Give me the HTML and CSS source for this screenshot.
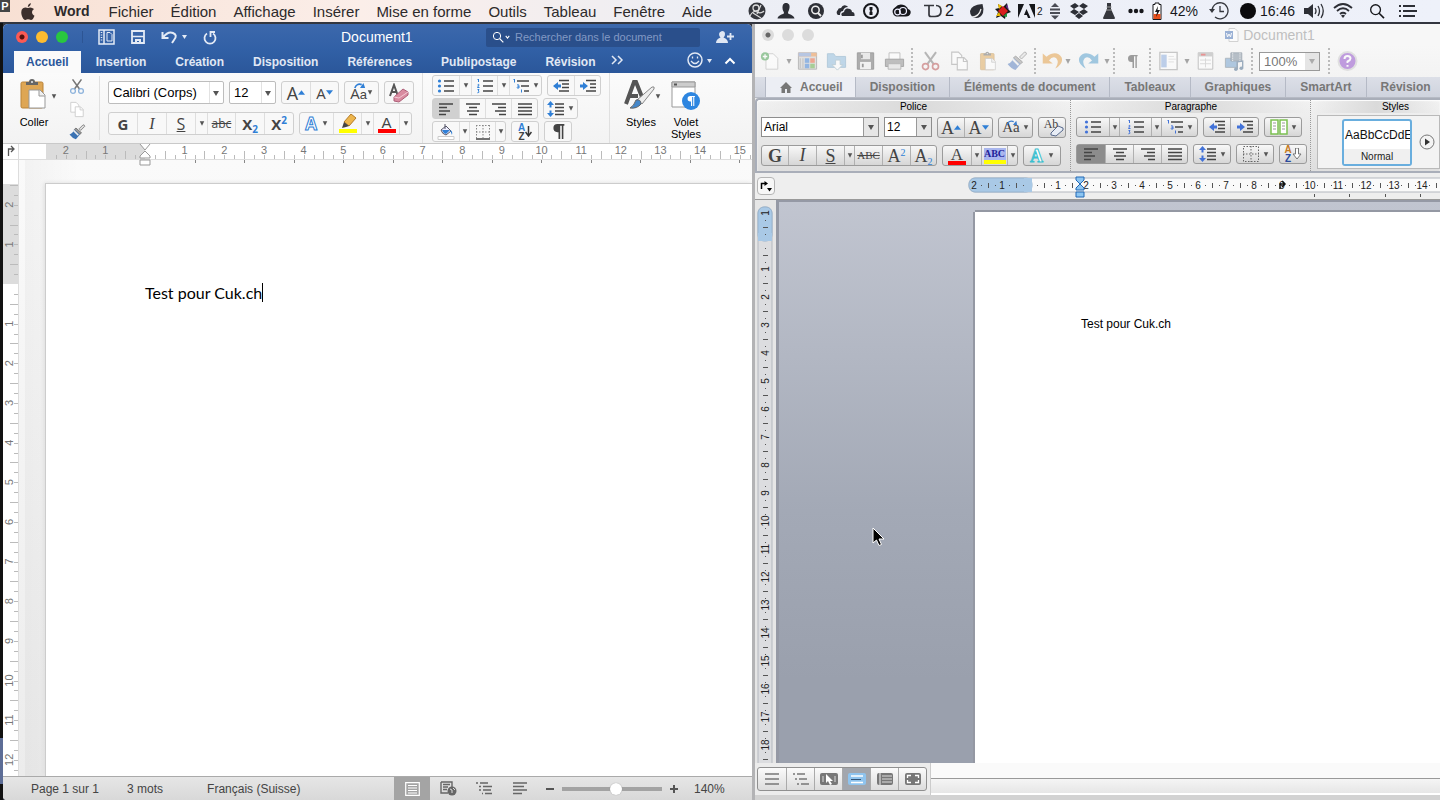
FILE: index.html
```html
<!DOCTYPE html>
<html lang="fr">
<head>
<meta charset="utf-8">
<title>Document1</title>
<link rel="stylesheet" href="styles.css">
</head>
<body>
<svg class="defs" aria-hidden="true">
  <symbol id="caret" viewBox="0 0 8 6"><path d="M1 0h6L4 6z" fill="currentColor"/></symbol>
  <symbol id="bullets" viewBox="0 0 18 16"><path d="M7 3h10M7 8h10M7 13h10" stroke="currentColor" stroke-width="1.3"/><g fill="var(--accent)"><circle cx="2.5" cy="3" r="1.6"/><circle cx="2.5" cy="8" r="1.6"/><circle cx="2.5" cy="13" r="1.6"/></g></symbol>
  <symbol id="numbers" viewBox="0 0 18 16"><path d="M7 3h10M7 8h10M7 13h10" stroke="currentColor" stroke-width="1.3"/><path d="M1.500 2l1-1v3M1.500 7q1.500-1.500 1.500 0L1.500 9.500H3.500M1.500 11.500H3L2.200 13q1.500.5.5 1.500l-1.300.3" stroke="var(--accent)" fill="none"/></symbol>
  <symbol id="multi" viewBox="0 0 18 16"><path d="M5 3h12M9 8h8M12 13h5" stroke="currentColor" stroke-width="1.300"/><path d="M1.500 2l1-1v3.500M5 7q2-1 2 1v2H5.500q-1-.2 0-1.200H7M9.500 11.500v3" stroke="var(--accent)" fill="none"/></symbol>
  <symbol id="left" viewBox="0 0 18 16"><path d="M2 3h14M2 6.500h8M2 10h11M2 13.500h7" stroke="currentColor" stroke-width="1.300"/></symbol>
  <symbol id="center" viewBox="0 0 18 16"><path d="M2 3h14M5 6.500h8M3 10h12M5 13.500h8" stroke="currentColor" stroke-width="1.300"/></symbol>
  <symbol id="right" viewBox="0 0 18 16"><path d="M2 3h14M8 6.500h8M5 10h11M9 13.500h7" stroke="currentColor" stroke-width="1.300"/></symbol>
  <symbol id="justify" viewBox="0 0 18 16"><path d="M2 3h14M2 6.500h14M2 10h14M2 13.500h14" stroke="currentColor" stroke-width="1.300"/></symbol>
  <symbol id="outdent" viewBox="0 0 18 16"><path d="M7 2.500h10M10 6h7M10 9.500h7M7 13h10" stroke="currentColor" stroke-width="1.300"/><path d="M1 8l5-4v2.500h3v3H6V12z" fill="var(--accent)"/></symbol>
  <symbol id="indent" viewBox="0 0 18 16"><path d="M7 2.500h10M11 6h6M11 9.500h6M7 13h10" stroke="currentColor" stroke-width="1.300"/><path d="M9 8L4 4v2.500H1v3h3V12z" fill="var(--accent)"/></symbol>
  <symbol id="spacing" viewBox="0 0 18 16"><path d="M8 3h9M8 6.500h9M8 10h9M8 13.500h9" stroke="currentColor" stroke-width="1.300"/><path d="M3.500 0L7 4H4.500v2.500h-2V4H0zM3.500 16L7 12H4.500V9.500h-2V12H0z" fill="var(--accent)"/></symbol>
  <symbol id="borders" viewBox="0 0 18 16"><path d="M2 1.500h14M2 8h14M2.500 1v13M9 1v13M15.500 1v13" stroke="#888" stroke-dasharray="1.500 1.500" fill="none"/><path d="M2 15h14" stroke="currentColor" stroke-width="1.500"/></symbol>
  <symbol id="pilcrow" viewBox="0 0 14 16"><path d="M12.500 1H6a3.800 3.800 0 0 0 0 7.600h1V15h1.600V2.500h1.500V15h1.500V2.500h.9z" fill="currentColor"/></symbol>
  <symbol id="scissors" viewBox="0 0 18 18"><path d="M4 1l8 11M14 1L6 12" stroke="#777" stroke-width="1.800" fill="none"/><circle cx="4.500" cy="14" r="2.700" fill="none" stroke="var(--cut)" stroke-width="1.500"/><circle cx="13.500" cy="14" r="2.700" fill="none" stroke="var(--cut)" stroke-width="1.500"/></symbol>
  <symbol id="copy" viewBox="0 0 18 18"><path d="M2 1h6l3 3v8H2z" fill="#fff" stroke="currentColor"/><path d="M7 6h6l3 3v8H7z" fill="#fff" stroke="currentColor"/><path d="M12.500 6v3.500H16" fill="none" stroke="currentColor"/></symbol>
  <symbol id="brush" viewBox="0 0 20 20"><path d="M12 6l5-5q2 0 2 2l-5 5z" fill="#ddd" stroke="#777"/><path d="M8 5l7 6-2 2-7-6z" fill="#999" stroke="#666"/><path d="M6 7l7 6-5 6q-4-1-8-6 4-1 6-6z" fill="var(--bristle)"/><path d="M5 8l6 6" stroke="#eee" stroke-width="2"/></symbol>
  <symbol id="clipboard" viewBox="0 0 28 32"><rect x="1" y="4" width="22" height="26" rx="1.500" fill="#dea654" stroke="#b98338"/><path d="M6 7V4h3q0-3 3-3t3 3h3v3z" fill="#666"/><circle cx="12" cy="4" r="1" fill="#eee"/><path d="M9 12h11l5 5v13H9z" fill="#fff" stroke="#999"/><path d="M19 12v6h6" fill="#eee" stroke="#999"/></symbol>
  <symbol id="undo" viewBox="0 0 18 16"><path d="M2 2v8h8L7 7.500q3-4 6-1.500 2.500 3-1 8 7-4 5-9-4-6-12-.5z" fill="currentColor"/></symbol>
  <symbol id="magnifier" viewBox="0 0 18 18"><circle cx="7.500" cy="7.500" r="5.500" fill="none" stroke="currentColor" stroke-width="1.500"/><path d="M11.500 11.500L17 17" stroke="currentColor" stroke-width="1.800"/></symbol>
</svg>

<header class="menubar">
  <span class="plogo" aria-hidden="true">P</span>
  <svg class="apple" viewBox="0 0 14 17" aria-hidden="true"><path d="M9.800 0q0 3-3 4Q6.800 1 9.800 0zM7 5q3-1.500 6 1-3 2-1.500 5 .7 1.300 2 1.800-1.500 4.200-3.500 4.200-1.500-.8-3-.8t-2.500.8Q2 17 .6 12-.5 7 2 5.300q2-1.500 5-.3z" fill="#3c2f2c"/></svg>
  <nav class="menus">
    <button class="app">Word</button><button>Fichier</button><button>Édition</button><button>Affichage</button><button>Insérer</button><button>Mise en forme</button><button>Outils</button><button>Tableau</button><button>Fenêtre</button><button>Aide</button>
  </nav>
  <div class="extras">
    <svg width="20" height="18" viewBox="0 0 20 18"><circle cx="10" cy="9" r="8.500" fill="#35373d"/><circle cx="9" cy="6" r="3" fill="none" stroke="#ddd" stroke-width="1.300"/><path d="M3 14q3-6 7-4t7-1M6 11l8 5M14 3l-4 9" stroke="#ddd" fill="none" stroke-width="1.200"/></svg>
    <svg width="22" height="18" viewBox="0 0 22 18"><path d="M11 1c3 0 4 2.500 3.500 5S13 9.500 13 11c0 1.500 6 1.500 6.500 5.500h-17C3 12.500 9 12.500 9 11c0-1.500-1.500-2.500-1.500-5S8 1 11 1z" fill="#2d2f36"/></svg>
    <svg width="22" height="18" viewBox="0 0 22 18"><circle cx="11" cy="9" r="8" fill="#2d2f36"/><circle cx="10.500" cy="8" r="3.700" fill="none" stroke="#eee" stroke-width="1.500"/><path d="M13 11l3 3" stroke="#eee" stroke-width="2"/></svg>
    <svg width="20" height="18" viewBox="0 0 20 18"><path d="M3 13a3 3 0 0 1 0-5q0-2 3-2 2-4 6-2l1 1q-4 0-5 4-3 0-3 4z" fill="#2d2f36"/><path d="M7 14q-2-3 2-4 1-5 6-3 2 1 2 3 3 0 2.500 4z" fill="#2d2f36"/></svg>
    <svg width="16" height="18" viewBox="0 0 16 18"><circle cx="8" cy="9" r="7" fill="none" stroke="#16171b" stroke-width="2"/><path d="M6.500 5h3v3l-1 1 1 1v3h-3v-3l1-1-1-1z" fill="#16171b"/></svg>
    <svg width="28" height="18" viewBox="0 0 28 18"><path d="M9 14.500a5 5 0 0 1-1-9Q12 .5 18 3.500q3 2 3 3.500 3.500 1 2.500 4.500-1 3-4.500 3z" fill="#16171b"/><circle cx="10.500" cy="10" r="2.800" fill="none" stroke="#eef" stroke-width="1.200"/><circle cx="16" cy="9" r="3.500" fill="none" stroke="#eef" stroke-width="1.200"/></svg>
    <span class="td"><svg width="20" height="16" viewBox="0 0 20 16"><path d="M1 2.500h10M6 2.500v9q0 2 2 2h4q6 0 6-5.500t-5-5.500" fill="none" stroke="#35373d" stroke-width="1.700"/></svg>2</span>
    <svg width="20" height="18" viewBox="0 0 20 18"><path d="M15.500 2Q17 7 16 11q-2 5-7 5-6-1-6-7 1-6 12.500-7z" fill="#2d2f36"/><path d="M5 15q7 0 9-8" fill="none" stroke="#eee" stroke-width="1.200"/></svg>
    <svg width="16" height="18" viewBox="0 0 16 18"><path d="M3 2l5 3 4-4 1 6 3 3-5 2-1 5-4-3-5 2 2-6-3-3 4-1z" fill="#181818"/><path d="M8 4l5 5-5 5-5-5z" fill="#d81e1e"/><path d="M3 2l4 2-3 3z" fill="#f0c000"/><path d="M12 2l2 6-3-3z" fill="#6a2d98"/><path d="M12 15l-4-1 4-3z" fill="#20943c"/><path d="M1 14l3-4 2 4z" fill="#e9b700"/></svg>
    <span class="adobe"><svg width="17" height="16" viewBox="0 0 17 16"><path d="M0 1h6L0 15zM11 1h6v14zM8.500 6l4 9H10l-1.200-3H6z" fill="#16171b"/></svg><b>2</b></span>
    <svg width="10" height="18" viewBox="0 0 10 18"><path d="M1 5l4-4 4 4zM0 6.500h10v2H0zM0 10h10v2H0zM1 13.500h8l-4 4z" fill="#4a4c55"/></svg>
    <svg width="22" height="18" viewBox="0 0 22 18"><path d="M7 1l4 3-5 3-4-3zM15 1l5 3-4 3-5-3zM6 7l5 3-4 3-5-3zM16 7l4 3-5 3-4-3zM7 14l4-3 4 3-4 3z" fill="#2d2f36"/></svg>
    <svg width="22" height="18" viewBox="0 0 22 18"><path d="M9 1h4v6l4 9q0 1-1 1H6q-1 0-1-1l4-9z" fill="#35373d"/><path d="M8.500 5h5M8 8h6" stroke="#999"/></svg>
    <svg width="16" height="18" viewBox="0 0 16 18"><g fill="#16171b"><circle cx="2.500" cy="9" r="2.200"/><circle cx="8" cy="9" r="2.200"/><circle cx="13.500" cy="9" r="2.200"/></g></svg>
    <svg width="10" height="18" viewBox="0 0 10 18"><path d="M3 1h4v1.500h2v15H1v-15h2z" fill="#fff" stroke="#16171b"/><path d="M1.500 12h7v5h-7z" fill="#e8501c"/><path d="M6 4L3 10h2l-1 5 4-7H5.500z" fill="#16171b"/></svg>
    <span>42%</span>
    <svg width="26" height="18" viewBox="0 0 26 18"><path d="M6 9a8 8 0 1 1 3 6" fill="none" stroke="#35373d" stroke-width="1.300"/><path d="M3 7l3 4 3-4z" fill="#35373d"/><path d="M14 4v5.500h4" fill="none" stroke="#35373d" stroke-width="1.300"/></svg>
    <svg width="16" height="18" viewBox="0 0 16 18"><circle cx="8" cy="9" r="8" fill="#0b0b0e"/></svg>
    <span class="clock">16:46</span>
    <svg width="22" height="18" viewBox="0 0 22 18"><path d="M1 6h4l5-4v14l-5-4H1z" fill="#2d2f36"/><path d="M12 6q2 3 0 6M15 4q3 5 0 10M18 2q4.500 7 0 14" fill="none" stroke="#2d2f36" stroke-width="1.300"/></svg>
    <svg width="20" height="18" viewBox="0 0 20 18"><path d="M1 6q9-8 18 0M4 9q6-5.500 12 0M7 12q3-2.500 6 0" fill="none" stroke="#2d2f36" stroke-width="1.800"/><path d="M8 13.500q2-1.500 4 0L10 16z" fill="#2d2f36"/></svg>
    <svg width="30" height="16" viewBox="-7 0 30 18"><use href="#magnifier" width="18" height="18"/></svg>
    <svg width="18" height="18" viewBox="0 0 18 18"><path d="M0 4h2M0 9h2M0 14h2M4 4h12M4 9h14M4 14h12" stroke="#2d2f36" stroke-width="2"/></svg>
  </div>
</header>

<main class="desktop">
  <div class="edge"></div>

  <section class="win modern" aria-label="Document1, Word 2016">
    <div class="m-title">
      <div class="lights"><i class="red"></i><i class="yellow"></i><i class="green"></i></div>
      <div class="quick">
        <svg width="17" height="16" viewBox="0 0 17 16"><path d="M1 1h15v14H1zM6 1v14" fill="none" stroke="currentColor" stroke-width="1.500"/><path d="M3.500 3v10" stroke="currentColor" stroke-width="1.500" stroke-dasharray="1 1.500"/><path d="M9 3.500h3l2 2V12H9z" fill="none" stroke="currentColor"/></svg>
        <svg width="14" height="14" viewBox="0 0 14 14"><path d="M1 1h12v12H1z" fill="none" stroke="currentColor" stroke-width="1.800"/><path d="M1 6.500h12" fill="none" stroke="currentColor" stroke-width="1.600"/><path d="M4 9h6v5H8v-3H6v3H4z" fill="currentColor"/></svg>
        <svg width="26" height="16" viewBox="0 0 26 16"><path d="M1.500 3v6h6M2 8.500Q7 2 12 4t1 7l-2 3" fill="none" stroke="currentColor" stroke-width="2"/><path d="M21 6h5l-2.500 4z" fill="currentColor"/></svg>
        <svg width="14" height="15" viewBox="0 0 14 15"><path d="M4 3.500a5.500 5.500 0 1 0 6 0M7.500 7V2H12" fill="none" stroke="currentColor" stroke-width="1.800"/></svg>
      </div>
      <h1>Document1</h1>
      <label class="search"><svg width="12" height="14" viewBox="0 0 18 18"><use href="#magnifier"/></svg><svg width="5" height="4" viewBox="0 0 7 5"><path d="M1 1l2.500 3L6 1" fill="none" stroke="#fff" stroke-width="1.500"/></svg><input type="search" placeholder="Rechercher dans le document" aria-label="Rechercher dans le document"></label>
      <svg class="share" width="18" height="14" viewBox="0 0 18 14"><path d="M6 1q3 0 3 3T7.500 7.500Q12 9 12 13H0Q0 9 4.500 7.500 3 6 3 4t3-3z" fill="#dfe7f4"/><path d="M14.500 3v7M11 6.500h7" stroke="#dfe7f4" stroke-width="1.800"/></svg>
    </div>
    <nav class="m-tabs">
      <button class="on">Accueil</button><button>Insertion</button><button>Création</button><button>Disposition</button><button>Références</button><button>Publipostage</button><button>Révision</button>
      <svg class="more" width="13" height="10" viewBox="0 0 13 10"><path d="M1 1l4 4-4 4M7 1l4 4-4 4" fill="none" stroke="currentColor" stroke-width="1.500"/></svg>
      <svg class="smile" width="44" height="18" viewBox="0 0 44 18"><circle cx="8" cy="9" r="7" fill="none" stroke="currentColor" stroke-width="1.500"/><path d="M5.500 5.500v2M10.500 5.500v2M4 10q4 5 8 0" fill="none" stroke="currentColor" stroke-width="1.300"/><path d="M20 8h5l-2.500 4z" fill="currentColor"/></svg>
      <svg class="fold" width="12" height="8" viewBox="0 0 12 8"><path d="M1.500 6.500L6 2l4.500 4.500" fill="none" stroke="#fff" stroke-width="2"/></svg>
    </nav>

    <div class="m-ribbon">
      <div class="m-paste">
        <button class="big"><svg width="28" height="32"><use href="#clipboard"/></svg><span>Coller</span></button>
        <svg class="caret"><use href="#caret"/></svg>
        <div class="stack">
          <svg width="16" height="17"><use href="#scissors"/></svg>
          <svg class="faint" width="16" height="17"><use href="#copy"/></svg>
          <svg width="17" height="16"><use href="#brush"/></svg>
        </div>
      </div>
      <div class="m-font">
        <div class="row">
          <span class="combo wide"><select aria-label="Police"><option>Calibri (Corps)</option></select></span>
          <span class="combo"><select aria-label="Taille"><option>12</option></select></span>
          <div class="seg"><button class="w28"><span class="g20">A</span><svg class="tri" viewBox="0 0 8 5"><path d="M0 5l4-5 4 5z"/></svg></button><button class="w28"><span class="g17">A</span><svg class="tri" viewBox="0 0 8 5"><path d="M0 0l4 5 4-5z"/></svg></button></div>
          <div class="seg"><button class="w33"><span class="case"><span class="g17">A</span>a<svg viewBox="0 0 14 8"><path d="M1 7q2-6 8-4" fill="none" stroke="#2f7fd6" stroke-width="2"/><path d="M13 7H7l4-6z" fill="#2f7fd6"/></svg></span><svg class="caret"><use href="#caret"/></svg></button></div>
          <div class="seg"><button class="w28" aria-label="Effacer la mise en forme"><svg width="22" height="20" viewBox="0 0 22 20"><path d="M2 13L6 2l4 11M4 9h4" fill="none" stroke="#555" stroke-width="2"/><path d="M6 14L15 6l5 3v3l-9 7-5-1z" fill="#d98ba0" stroke="#ad5f78"/><path d="M6 14l5 1 9-6" fill="none" stroke="#f3c9d4"/></svg></button></div>
        </div>
        <div class="row">
          <div class="seg">
            <button class="w28"><b>G</b></button><button class="w28"><i class="ital">I</i></button><button class="w28"><u>S</u></button><button class="w12" aria-label="Soulignement"><svg class="caret"><use href="#caret"/></svg></button><button class="w28"><s>abc</s></button><button class="w28"><b>X<sub>2</sub></b></button><button class="w28"><b>X<sup>2</sup></b></button>
          </div>
          <div class="seg">
            <button class="w33"><span class="glow">A</span><svg class="caret"><use href="#caret"/></svg></button><button class="w28" aria-label="Surlignage"><svg width="20" height="20" viewBox="0 0 20 20"><path d="M1 15h18v4H1z" fill="#ff0"/><path d="M6 8l7-8 5 4-7 8z" fill="#edb64e" stroke="#b37b28"/><path d="M6 8l5 4-3 1-4 1z" fill="#444"/></svg></button><button class="w12" aria-label="Couleur de surlignage"><svg class="caret"><use href="#caret"/></svg></button><button class="w26"><span class="ink">A</span></button><button class="w12" aria-label="Couleur de police"><svg class="caret"><use href="#caret"/></svg></button>
          </div>
        </div>
      </div>
      <div class="m-para">
        <div class="row">
          <div class="seg"><button class="w26" aria-label="Puces"><svg class="ic"><use href="#bullets"/></svg></button><button class="w12" aria-label="Style de puces"><svg class="caret"><use href="#caret"/></svg></button><button class="w26" aria-label="Numérotation"><svg class="ic"><use href="#numbers"/></svg></button><button class="w12" aria-label="Style de numérotation"><svg class="caret"><use href="#caret"/></svg></button><button class="w32" aria-label="Liste à plusieurs niveaux"><svg class="ic"><use href="#multi"/></svg><svg class="caret"><use href="#caret"/></svg></button></div>
          <div class="seg"><button class="w26" aria-label="Diminuer le retrait"><svg class="ic"><use href="#outdent"/></svg></button><button class="w26" aria-label="Augmenter le retrait"><svg class="ic"><use href="#indent"/></svg></button></div>
        </div>
        <div class="row">
          <div class="seg"><button class="w26 on" aria-label="Gauche"><svg class="ic"><use href="#left"/></svg></button><button class="w26" aria-label="Centrer"><svg class="ic"><use href="#center"/></svg></button><button class="w26" aria-label="Droite"><svg class="ic"><use href="#right"/></svg></button><button class="w26" aria-label="Justifier"><svg class="ic"><use href="#justify"/></svg></button></div>
          <div class="seg"><button class="w33" aria-label="Interligne"><svg class="ic"><use href="#spacing"/></svg><svg class="caret"><use href="#caret"/></svg></button></div>
        </div>
        <div class="row">
          <div class="seg"><button class="w26" aria-label="Trame"><svg class="ic" viewBox="0 0 18 16"><path d="M1 12.500h16v3H1z" fill="#fff" stroke="#ccc"/><path d="M4 6l5-4 5 5-5 4q-4-1-5-5z" fill="#eef" stroke="#556"/><path d="M5 6h8l-4 4q-3-1-4-4zM13 6q3 1 2 5z" fill="#2f7fd6"/><path d="M8 0v5" stroke="#556"/></svg></button><button class="w10" aria-label="Couleur de trame"><svg class="caret"><use href="#caret"/></svg></button><button class="w26" aria-label="Bordures"><svg class="ic"><use href="#borders"/></svg></button><button class="w10" aria-label="Style de bordure"><svg class="caret"><use href="#caret"/></svg></button></div>
          <div class="seg"><button class="w26"><span class="az"><em>A</em>Z</span><svg width="7" height="11" viewBox="0 0 7 11"><path d="M3.500 0v9M.5 6l3 4 3-4" fill="none" stroke="#333" stroke-width="1.500"/></svg></button></div>
          <div class="seg"><button class="w26" aria-label="Marques de paragraphe"><svg width="15" height="17"><use href="#pilcrow"/></svg></button></div>
        </div>
      </div>
      <div class="m-styles">
        <button class="big"><svg width="40" height="32" viewBox="0 0 40 32"><path d="M5 25L13 3h2l6 15M8 17h9" fill="none" stroke="#555" stroke-width="4"/><path d="M16 21L31 8q3-1 2 2L21 25z" fill="#eee" stroke="#888"/><path d="M15 21q5-1 5 4-4 5-11 4 4-2 6-8z" fill="#4587c9" stroke="#666"/></svg><span>Styles</span></button>
        <svg class="caret"><use href="#caret"/></svg>
        <button class="big pane"><svg width="32" height="32" viewBox="0 0 32 32"><path d="M2 3h23v25H2z" fill="#fff" stroke="#999"/><path d="M2 3h23v5H2z" fill="#ccc" stroke="#999"/><path d="M4 5.500h3" stroke="#555" stroke-width="2"/><circle cx="21" cy="22" r="9" fill="#2e86e0"/><svg x="16" y="16" width="10" height="12" color="#fff"><use href="#pilcrow"/></svg></svg><span>Volet<br>Styles</span></button>
      </div>
    </div>

    <div class="m-hruler">
      <div class="tabstop"><svg width="8" height="11" viewBox="0 0 8 11"><path d="M1.500 11V4H6M4 1l3 3-3 3" fill="none" stroke="#555" stroke-width="1.300"/></svg></div>
      <svg class="scale" id="m-h"></svg>
    </div>
    <div class="m-body">
      <svg class="vscale" id="m-v"></svg>
      <div class="m-canvas"><article class="m-page"><p><span class="typed">Test pour Cuk.ch</span></p></article></div>
    </div>

    <footer class="m-status">
      <span>Page 1 sur 1</span><span>3 mots</span><span class="lang">Français (Suisse)</span>
      <div class="views">
        <button class="on" aria-label="Page"><svg width="15" height="14" viewBox="0 0 15 14"><path d="M.7.7h13.600v12.600H.7zM3 3.500h9M3 6h9M3 8.500h9M3 11h9" fill="none" stroke="#fff" stroke-width="1.200"/></svg></button>
        <button aria-label="Web"><svg width="17" height="15" viewBox="0 0 17 15"><path d="M1 1h11v5M1 1v11h7M3 3.500h7M3 6h5M3 8.500h4" fill="none" stroke="currentColor" stroke-width="1.400"/><circle cx="12" cy="10" r="4.500" fill="currentColor"/><path d="M10 8l2 1 0 3M13 7l2 2" stroke="#ddd" fill="none"/></svg></button>
        <button aria-label="Plan"><svg width="16" height="13" viewBox="0 0 16 13"><path d="M0 1h2M4 1h8M3 4.500h2M7 4.500h9M3 8h2M7 8h8M6 11.500h1M9 11.500h7" stroke="currentColor" stroke-width="1.300"/></svg></button>
        <button aria-label="Brouillon"><svg width="15" height="13" viewBox="0 0 15 13"><path d="M0 1h14M0 4.500h11M0 8h14M0 11.500h9" stroke="currentColor" stroke-width="1.300"/></svg></button>
      </div>
      <button class="zoombtn" aria-label="Réduire"><svg width="8" height="8" viewBox="0 0 8 8"><path d="M0 4h8" stroke="currentColor" stroke-width="2"/></svg></button>
      <input class="zoom" type="range" min="0" max="100" value="55" aria-label="Zoom">
      <button class="zoombtn" aria-label="Agrandir"><svg width="8" height="8" viewBox="0 0 8 8"><path d="M0 4h8M4 0v8" stroke="currentColor" stroke-width="2"/></svg></button>
      <span class="pct">140%</span>
    </footer>
  </section>

  <section class="win classic" aria-label="Document1, Word 2011">
    <div class="c-title">
      <div class="lights off"><i class="red"></i><i></i><i></i></div>
      <h2><svg width="14" height="14" viewBox="0 0 14 14"><path d="M4 .5h6l3 3v10H4z" fill="#fff" stroke="#bbb"/><path d="M0 3h8v8H0z" fill="#5d83c0"/><path d="M1.500 5l1 4L4 6l1.500 3 1-4" fill="none" stroke="#fff"/></svg>Document1</h2>
    </div>
    <div class="c-tools">
      <svg class="t29" viewBox="0 0 22 22"><path d="M6 3h8l5 5v12H6z" fill="#fff" stroke="#aaa"/><circle cx="5" cy="6" r="4.500" fill="#3e9a46"/><path d="M5 3.500v5M2.500 6h5" stroke="#fff" stroke-width="1.500"/></svg>
      <svg class="caret"><use href="#caret"/></svg>
      <svg class="t29" viewBox="0 0 22 22"><path d="M1 2h20v18H1z" fill="#ccc" stroke="#777"/><path d="M1 2h20v4H1z" fill="#e98a3d"/><path d="M1 2h14v4H1z" fill="#7a98cf"/><path d="M8 8h5v5H8z" fill="#3277d1"/><path d="M14 8h5v5h-5z" fill="#e6582e"/><path d="M8 14h5v5H8z" fill="#3277d1"/><path d="M14 14h5v5h-5z" fill="#5ca83c"/><path d="M3 8v11M6 8v11" stroke="#888"/></svg>
      <svg class="t29" viewBox="0 0 22 22"><path d="M1 3h7l2 3h11v12H1z" fill="#8ab9dc" stroke="#6f9fc0"/><path d="M10 10h5v5h3l-6 6-6-6h4z" fill="#fff" stroke="#8ab"/></svg>
      <svg class="t29" viewBox="0 0 22 22"><path d="M2 2h18v18H2z" fill="#666" stroke="#444"/><path d="M6 2h10v7H6z" fill="#ddd"/><path d="M5 12h12v8H5z" fill="#eee"/><path d="M8 14v4M7 4v4" stroke="#444" stroke-width="2"/></svg>
      <svg class="t29" viewBox="0 0 22 22"><path d="M5 2h12v8H5z" fill="#fff" stroke="#888"/><path d="M1 9h20v8H1z" fill="#888" stroke="#555"/><path d="M4 14h14v6H4z" fill="#ddd" stroke="#777"/></svg>
      <i class="dots"></i>
      <svg class="t29 red" viewBox="0 0 18 18"><use href="#scissors"/></svg>
      <svg class="t29 pale" viewBox="0 0 18 18"><use href="#copy"/></svg>
      <svg class="t29" viewBox="0 0 28 32"><use href="#clipboard"/></svg>
      <svg class="t29" viewBox="0 0 20 20"><use href="#brush"/></svg>
      <i class="dots"></i>
      <svg class="t29 gold" viewBox="0 0 18 16"><use href="#undo"/></svg>
      <svg class="caret"><use href="#caret"/></svg>
      <svg class="t29 sky" viewBox="0 0 18 16"><g transform="matrix(-1 0 0 1 18 0)"><use href="#undo"/></g></svg>
      <svg class="caret"><use href="#caret"/></svg>
      <i class="dots"></i>
      <svg class="t29 small" viewBox="0 0 14 16"><use href="#pilcrow"/></svg>
      <i class="dots"></i>
      <svg class="t29" viewBox="0 0 22 22"><path d="M1.500 1.500h19v19h-19z" fill="#fff" stroke="#999" stroke-width="1.500"/><path d="M3 4h6v14H3z" fill="#86a9de"/><path d="M11 6h6M11 9h8M11 12h6" stroke="#ccc"/></svg>
      <svg class="caret"><use href="#caret"/></svg>
      <svg class="t29" viewBox="0 0 22 22"><path d="M3 2h16v18H3z" fill="#fff" stroke="#888"/><path d="M3 2h16v4H3z" fill="#aaa"/><path d="M6 4h5" stroke="#d33" stroke-width="2"/><path d="M5 10h12M5 14h12M11 8v10" stroke="#bbb"/></svg>
      <svg class="t29" viewBox="0 0 22 22"><path d="M1 8h13v10H1z" fill="#6b9bcb" stroke="#678"/><path d="M7 2h12v9H7z" fill="#789" stroke="#567"/><path d="M9 2v9M17 2v9" stroke="#fff" stroke-dasharray="1 1"/><path d="M14 20v-8l6-1v8" fill="none" stroke="#468" stroke-width="1.500"/><circle cx="12.500" cy="20" r="2" fill="#468"/><circle cx="18.500" cy="19" r="2" fill="#468"/></svg>
      <i class="dots"></i>
      <span class="combo zoomsel"><select aria-label="Zoom"><option>100%</option></select></span>
      <i class="dots"></i>
      <svg class="t29 help" viewBox="0 0 20 20"><circle cx="10" cy="10" r="9" fill="#8b45c8" stroke="#ccc" stroke-width="2"/><path d="M7 8q0-3 3-3t3 2.500q0 1.500-3 3V12M10 14v1.800" fill="none" stroke="#fff" stroke-width="2"/></svg>
    </div>
    <nav class="c-tabs">
      <button class="on"><svg width="12" height="11" viewBox="0 0 12 11"><path d="M6 0l6 6h-1.500v5H7V7H5v4H1.500V6H0z" fill="#777"/></svg>Accueil</button><button>Disposition</button><button>Éléments de document</button><button>Tableaux</button><button>Graphiques</button><button>SmartArt</button><button>Révision</button>
    </nav>
    <div class="c-ribbon">
      <div class="c-group police">
        <h3>Police</h3>
        <div class="row">
          <span class="combo wide"><select aria-label="Police"><option>Arial</option></select></span>
          <span class="combo"><select aria-label="Taille"><option>12</option></select></span>
          <div class="seg"><button class="w26"><span class="g20">A</span><svg class="tri" viewBox="0 0 8 5"><path d="M0 5l4-5 4 5z"/></svg></button><button class="w28"><span class="g20">A</span><svg class="tri" viewBox="0 0 8 5"><path d="M0 0l4 5 4-5z"/></svg></button></div>
          <div class="seg"><button class="w33"><span class="case"><span>A</span>a<svg viewBox="0 0 14 8"><path d="M1 7q2-6 8-4" fill="none" stroke="#3f80cf" stroke-width="1.500"/><path d="M13 7H8l4-5z" fill="#3f80cf"/></svg></span><svg class="caret"><use href="#caret"/></svg></button></div>
          <div class="seg"><button class="w26"><span class="ab">Ab</span><svg class="rubber" width="14" height="12" viewBox="0 0 14 12"><path d="M1 8l7-7 5 2v2l-7 6-5-1z" fill="#e8edf6" stroke="#57698c"/></svg></button></div>
        </div>
        <div class="row">
          <div class="seg">
            <button class="w26"><b>G</b></button><button class="w28"><i class="ital">I</i></button><button class="w28"><u>S</u></button><button class="w10" aria-label="Soulignement"><svg class="caret"><use href="#caret"/></svg></button><button class="w28"><s>ABC</s></button><button class="w28"><span>A<sup>2</sup></span></button><button class="w26"><span>A<sub>2</sub></span></button>
          </div>
          <div class="seg"><button class="w28"><span class="ink">A</span></button><button class="w10" aria-label="Couleur de police"><svg class="caret"><use href="#caret"/></svg></button><button class="w26"><span class="hl">ABC</span></button><button class="w10" aria-label="Surlignage"><svg class="caret"><use href="#caret"/></svg></button></div>
          <div class="seg"><button class="w36"><span class="glow">A</span><svg class="caret"><use href="#caret"/></svg></button></div>
        </div>
      </div>
      <div class="c-group para">
        <h3>Paragraphe</h3>
        <div class="row">
          <div class="seg"><button class="w32" aria-label="Puces"><svg class="ic"><use href="#bullets"/></svg></button><button class="w10" aria-label="Style de puces"><svg class="caret"><use href="#caret"/></svg></button><button class="w32" aria-label="Numérotation"><svg class="ic"><use href="#numbers"/></svg></button><button class="w10" aria-label="Style de numérotation"><svg class="caret"><use href="#caret"/></svg></button><button class="w36" aria-label="Liste à plusieurs niveaux"><svg class="ic"><use href="#multi"/></svg><svg class="caret"><use href="#caret"/></svg></button></div>
          <div class="seg"><button class="w26" aria-label="Diminuer le retrait"><svg class="ic"><use href="#outdent"/></svg></button><button class="w28" aria-label="Augmenter le retrait"><svg class="ic"><use href="#indent"/></svg></button></div>
          <div class="seg"><button class="w36" aria-label="Colonnes"><svg class="ic" viewBox="0 0 18 16"><path d="M1 1h7v14H1zM10 1h7v14h-7z" fill="#fff" stroke="#7cc152" stroke-width="1.500"/><path d="M3 4h3M3 7h3M3 10h3M12 4h3M12 7h3M12 10h3" stroke="#999"/></svg><svg class="caret"><use href="#caret"/></svg></button></div>
        </div>
        <div class="row">
          <div class="seg"><button class="w28 on" aria-label="Gauche"><svg class="ic"><use href="#left"/></svg></button><button class="w28" aria-label="Centrer"><svg class="ic"><use href="#center"/></svg></button><button class="w28" aria-label="Droite"><svg class="ic"><use href="#right"/></svg></button><button class="w26" aria-label="Justifier"><svg class="ic"><use href="#justify"/></svg></button></div>
          <div class="seg"><button class="w36" aria-label="Interligne"><svg class="ic"><use href="#spacing"/></svg><svg class="caret"><use href="#caret"/></svg></button></div>
          <div class="seg"><button class="w36" aria-label="Bordures"><svg class="ic" viewBox="0 0 18 16"><path d="M1.500.5h15v15h-15zM9 0v16M1 8h16" fill="none" stroke="#666" stroke-dasharray="1.500 1.500"/></svg><svg class="caret"><use href="#caret"/></svg></button></div>
          <div class="seg"><button class="w26"><span class="az"><em>A</em>Z</span><svg width="10" height="12" viewBox="0 0 10 12"><path d="M3.500 0h3v6H9l-4 5-4-5h2.500z" fill="#fff" stroke="#777"/></svg></button></div>
        </div>
      </div>
      <div class="c-group gallery">
        <h3>Styles</h3>
        <div class="shelf">
          <button class="style"><span class="sample">AaBbCcDdE</span><span class="name">Normal</span></button>
          <button class="next" aria-label="Suivant"><svg width="16" height="16" viewBox="0 0 16 16"><circle cx="8" cy="8" r="7" fill="#f4f4f4" stroke="#777"/><path d="M6 4.500l5 3.500-5 3.500z" fill="#333"/></svg></button>
        </div>
      </div>
    </div>
    <div class="c-hruler">
      <button class="c-tabstop" aria-label="Tabulation"><svg width="12" height="12" viewBox="0 0 12 12"><path d="M1.500 9V3.500H6" fill="none" stroke="#000" stroke-width="1.500"/><path d="M4.500 1v5L8 3.500zM7 8h5l-2.500 3.500z"/></svg></button>
      <svg class="scale" id="c-h"></svg>
    </div>
    <div class="c-body">
      <svg class="vscale" id="c-v"></svg>
      <div class="c-canvas">
        <article class="c-page"><p>Test pour Cuk.ch</p></article>
        <svg class="pointer" width="14" height="20" viewBox="0 0 14 20"><path d="M1 1v15l3.500-3 2.500 5.500 2.500-1L7 12h5z" fill="#000" stroke="#fff"/></svg>
      </div>
    </div>
    <footer class="c-status">
      <div class="c-views">
        <button aria-label="Brouillon"><svg width="16" height="12" viewBox="0 0 16 12"><path d="M1 1h14M1 6h14M1 11h14" stroke="currentColor" stroke-width="1.700"/></svg></button>
        <button aria-label="Plan"><svg width="18" height="12" viewBox="0 0 18 12"><path d="M1 1h2M5 1h8M3 6h2M7 6h8M5 11h2M9 11h8" stroke="currentColor" stroke-width="1.700"/></svg></button>
        <button aria-label="Publication"><svg width="18" height="12" viewBox="0 0 18 12"><rect width="18" height="12" rx="2" fill="currentColor"/><path d="M6 1v9l2-2 2 4 2-1-2-3h3z" fill="#fff"/><path d="M3 3v6M15 3v6" stroke="#ddd"/></svg></button>
        <button class="on" aria-label="Page"><svg width="18" height="12" viewBox="0 0 18 12"><rect width="18" height="12" rx="2" fill="#8fc4ee"/><path d="M3 3h12M3 9.500h12" stroke="#fff" stroke-width="1.500"/><path d="M3 6.500h10" stroke="#357"/></svg></button>
        <button aria-label="Bloc-notes"><svg width="16" height="12" viewBox="0 0 16 12"><rect width="16" height="12" rx="2" fill="currentColor"/><path d="M5 3h10M5 6h10M5 9h10M3 0v12" stroke="#ddd" stroke-width="1.200"/></svg></button>
        <button aria-label="Plein écran"><svg width="16" height="12" viewBox="0 0 16 12"><rect width="16" height="12" rx="2" fill="currentColor"/><path d="M2.500 5V2.500H6M10 2.500h3.500V5M13.500 7v2.500H10M6 9.500H2.500V7" fill="none" stroke="#fff" stroke-width="1.300"/></svg></button>
      </div>
      <div class="c-scroll"></div>
    </footer>
  </section>
</main>
<script src="rulers.js"></script>
</body>
</html>
```

FILE: styles.css
```css
* { box-sizing: border-box; }
body { margin: 0; height: 100vh; min-height: 500px; display: flex; flex-direction: column; overflow: hidden; font-family: "Liberation Sans", Arial, sans-serif; color: #222; background: #33363f; }
button, input, select { font: inherit; color: inherit; margin: 0; padding: 0; border: 0; background: none; }
h1, h2, h3, p { margin: 0; font-weight: normal; }
svg { flex: none; display: block; }
.defs { position: absolute; width: 0; height: 0; }

/* System menu bar */
.menubar { height: 23px; display: flex; align-items: center; border-bottom: 1px solid #33363f; font-size: 15px; color: #2d2a2b; background: linear-gradient(90deg, #f8e0d3, #fbeee9 25%, #eceef5 50%, #eef1fa); flex: none; }
.plogo { width: 10px; height: 12px; align-self: flex-start; background: #444; color: #fff; font: bold 11px/12px "Liberation Sans", sans-serif; text-align: center; }
.apple { width: 14px; height: 17px; margin: 0 18px 0 11px; }
.menus { display: flex; gap: 17px; white-space: nowrap; }
.menus .app { font-weight: bold; font-size: 14px; margin: 0 2px 0 1px; }
.extras { margin-left: auto; padding-right: 23px; display: flex; align-items: center; gap: 8px; font-size: 14px; color: #16171b; }
.td, .adobe { display: flex; align-items: center; width: 36px; font-size: 16px; gap: 2px; }
.adobe { width: 24px; margin-left: -1px; }
.adobe b { font-size: 10px; font-weight: normal; }
.clock { margin-left: -4px; }

/* Desktop with two tiled windows */
.desktop { flex: 1; min-height: 0; display: grid; grid-template-columns: 3px minmax(0, 749fr) minmax(0, 688fr); }
.edge { background: linear-gradient(#111 92%, #5d6d96 92%, #5d6d96 98%, #111 98%); }
.win { min-width: 0; min-height: 0; display: flex; flex-direction: column; overflow: hidden; }
.row { display: flex; }
.seg { display: flex; }
.seg button { display: flex; align-items: center; justify-content: center; white-space: nowrap; line-height: 1; }
.w10 { width: 10px; } .w12 { width: 12px; } .w26 { width: 26px; } .w28 { width: 28px; } .w32 { width: 32px; } .w33 { width: 33px; } .w36 { width: 36px; }
.caret { width: 6px; height: 5px; color: #555; }
.tri { width: 7px; height: 5px; fill: #2f7fd6; }
.ic { width: 18px; height: 16px; }
.combo { position: relative; display: block; background: #fff; }
.combo select { appearance: none; width: 100%; height: 100%; display: block; padding-left: 4px; font-size: 13px; color: #000; }
.combo::after { content: ""; position: absolute; right: 4px; top: 50%; margin-top: -2px; border: 3px solid transparent; border-top: 5px solid #555; border-bottom: 0; pointer-events: none; }
.lights { display: flex; gap: 8px; }
.lights i { width: 12px; height: 12px; border-radius: 50%; background: #dcdcdc; }
.lights .yellow { background: #fdbc30; }
.lights .green { background: #29c740; }
.lights .red { background: radial-gradient(circle, #55100d 2px, #fb5a54 3px); }
.lights.off .red { background: radial-gradient(circle, #666 2px, #dcdcdc 3px); }
.case { position: relative; display: flex; align-items: baseline; font-size: 13px; }
.case svg { position: absolute; left: 4px; top: -1px; width: 12px; height: 7px; }
.az { font-size: 10px; line-height: 9px; font-weight: bold; display: flex; flex-direction: column; }
.az em { font-style: normal; color: #2f7fd6; }

/* Blue window */
.modern { --accent: #2f7fd6; --cut: #8fb4dc; --bristle: #3b73b4; border-radius: 5px 5px 0 4px; margin-top: 1px; background: #fafafa; color: #444; }
.m-title { height: 26px; display: flex; align-items: center; background: linear-gradient(#3c68ac, #3160a6); color: #e4ebf6; padding-left: 13px; flex: none; }
.m-title .lights { padding-right: 14px; border-right: 1px solid #2d5594; }
.quick { display: flex; align-items: center; gap: 16px; margin-left: 15px; }
.m-title h1 { font-size: 14px; margin-left: auto; width: 72px; color: #fff; }
.search { width: 214px; height: 19px; margin-left: 73px; display: flex; align-items: center; gap: 1px; padding-left: 6px; background: #2a4f8b; border-radius: 2px; color: #fff; }
.search input { flex: 1; min-width: 0; margin-left: 4px; font-size: 11px; appearance: none; outline: 0; }
.search input::placeholder { color: #8299c4; opacity: 1; }
.share { margin: 0 18px 0 16px; }
.m-tabs { height: 23px; display: flex; align-items: flex-end; background: linear-gradient(#3160a6, #2b579a); color: #e1e8f4; padding-left: 11px; font-size: 12px; font-weight: bold; flex: none; white-space: nowrap; }
.m-tabs button { height: 22px; font-weight: bold; }
.m-tabs button + button { padding: 0 14px 0 15px; }
.m-tabs .on { background: #fafafa; color: #2b579a; padding: 0 12px; }
.more { margin-left: 2px; margin-bottom: 8px; }
.smile { margin: 0 -7px 4px auto; }
.fold { margin: 0 16px 8px 0; }
.m-ribbon { height: 71px; display: flex; background: linear-gradient(#fbfbfb, #f3f3f3); border-bottom: 1px solid #c9c9c9; flex: none; }
.m-paste { width: 97px; display: flex; border-right: 1px solid #e0e0e0; margin: 3px 0; padding: 2px 0 0 15px; }
.big { display: flex; flex-direction: column; align-items: center; gap: 5px; font-size: 11px; line-height: 12px; color: #000; }
.m-paste .caret { margin: 16px 12px 0 1px; }
.m-paste .big { width: 32px; gap: 6px; }
.stack { display: flex; flex-direction: column; gap: 6px; }
.faint { color: #ccc; }
.m-font { width: 323px; padding: 8px 0 0 8px; display: flex; flex-direction: column; gap: 8px; border-right: 1px solid #e0e0e0; }
.m-font .row, .m-para .row { gap: 5px; }
.modern .seg { border: 1px solid #cfcfcf; border-radius: 3px; background: #f8f8f8; }
.modern .seg button + button { border-left: 1px solid #dedede; }
.modern .seg .on { background: #d0d0d0; }
.m-font .seg, .m-font .combo { height: 23px; }
.m-font .row:last-child .seg:first-child .w28 + .w28 { width: 29px; }
.m-font .combo { width: 47px; border: 1px solid #bdbdbd; border-radius: 2px; }
.m-font .combo.wide { width: 116px; }
.m-font .combo::before { content: ""; position: absolute; right: 13px; top: 0; bottom: 0; border-left: 1px solid #e2e2e2; }
.m-font b { font: bold 15px/20px "Open Sans", sans-serif; }
.m-font u { font: 16px/20px "Open Sans", sans-serif; text-decoration: underline; }
.m-font s { font-size: 12px; font-family: "Open Sans", sans-serif; }
.ital { font: italic 16px "Liberation Serif", serif; }
.g20 { font: 18px/20px "Open Sans", sans-serif; }
.g17 { font: 15px/20px "Open Sans", sans-serif; }
sub, sup { font-size: 10px; color: #2f7fd6; line-height: 0; }
sub { vertical-align: -3px; }
sup { vertical-align: 6px; }
.glow { font: bold 17px/20px "Open Sans", sans-serif; color: #fff; -webkit-text-stroke: 1px #2f7fd6; margin-right: 5px; }
.ink { width: 18px; line-height: 15px; height: 18px; border-bottom: 4px solid #f00; text-align: center; font-size: 15px; }
.m-para { width: 187px; padding: 2px 0 0 9px; display: flex; flex-direction: column; gap: 2px; border-right: 1px solid #e0e0e0; }
.m-para .seg { height: 21px; }
.m-styles { display: flex; padding: 6px 0 0 11px; }
.m-styles .big { width: 40px; gap: 5px; }
.m-styles .caret { margin: 15px 0 0 -6px; }
.m-styles .pane { width: 50px; }
.m-hruler { height: 16px; display: flex; background: #fff; border-bottom: 1px solid #ddd; flex: none; position: relative; z-index: 1; }
.tabstop { width: 16px; border-right: 1px solid #ddd; display: flex; justify-content: center; padding-top: 1px; }
.m-hruler .scale { flex: 1; min-width: 0; height: 23px; }
.m-body { flex: 1; min-height: 0; display: flex; }
.vscale { width: 16px; height: 100%; }
.m-body .vscale { background: #fff; border-right: 1px solid #ddd; }
.m-canvas { flex: 1; padding: 23px 0 0 26px; background: linear-gradient(90deg, transparent 6px, rgba(0, 0, 0, .03) 6px, transparent 60px), linear-gradient(#fafafa, #ececec); display: flex; }
.m-page { flex: 1; background: #fff; border: 1px solid #ccc; border-width: 1px 0 0 1px; box-shadow: -1px 0 4px #ddd; padding: 99px 0 0 99px; font: 16px/20px Lato, sans-serif; color: #000; }
.typed { border-right: 1px solid #000; }
.m-status { height: 24px; flex: none; display: flex; align-items: center; border-top: 1px solid #aaa; background: linear-gradient(#e6e6e6, #d8d8d8); font-size: 12px; color: #444; padding-left: 28px; white-space: nowrap; }
.m-status span + span { margin-left: 28px; }
.m-status span + .lang { margin-left: 44px; }
.views { display: flex; margin-left: auto; color: #666; align-self: stretch; }
.views button { width: 36px; display: flex; align-items: center; justify-content: center; }
.views .on { background: #a4a4a4; }
.zoombtn { width: 24px; display: flex; justify-content: center; color: #555; }
.zoom { appearance: none; width: 100px; height: 12px; background: linear-gradient(transparent 4px, #a3a3a3 4px, #a3a3a3 8px, transparent 8px); }
.zoom::-webkit-slider-thumb { appearance: none; width: 12px; height: 12px; border-radius: 50%; background: #fff; box-shadow: 0 0 1px #888; }
.m-status .pct { width: 58px; margin-left: 8px; }

/* Grey window */
.classic { --accent: #4272d8; --cut: #8fb4dc; --bristle: #5078bd; margin-top: 1px; border-left: 3px solid #b3b3b5; background: #efefef; color: #444; }
.c-title { height: 21px; display: flex; align-items: center; background: #f7f7f7; padding-left: 7px; flex: none; }
.c-title h2 { flex: 1; display: flex; gap: 4px; justify-content: center; align-items: center; font-size: 14px; color: #bfbfbf; padding-left: 286px; }
.c-title h2 svg { opacity: .6; }
.c-title .lights { width: 52px; flex: none; }
.c-tools { height: 32px; display: flex; align-items: center; background: linear-gradient(#f7f7f7, #f3f3f3); flex: none; padding-left: 1px; }
.c-tools > svg { opacity: .5; }
.t29 { width: 29px; height: 20px; }
.c-tools .caret { width: 8px; }
.small { height: 15px; }
.red { --cut: #b84c4c; }
.pale { color: #999; }
.gold { color: #e39a3c; width: 25px; }
.sky { color: #4d9acb; width: 27px; margin-left: 4px; }
.dots { height: 26px; width: 5px; flex: none; border-left: 2px dotted #bbb; margin-left: 2px; }
.zoomsel { width: 61px; height: 19px; border: 1px solid #999; margin: 0 6px 0 3px; }
.zoomsel select { color: #777; }
.zoomsel::after { opacity: .4; }
.zoomsel::before { content: ""; position: absolute; right: 0; top: 0; bottom: 0; width: 14px; background: rgba(0, 0, 0, .1); pointer-events: none; }
.c-tabs { height: 21px; display: flex; background: linear-gradient(#dcdfe7, #cfd3dd); border-bottom: 1px solid #b6bac4; padding-left: 10px; flex: none; white-space: nowrap; }
.c-tabs button { padding: 0 14px; font-size: 12px; font-weight: bold; color: #777; border-left: 1px solid #b5bac6; flex: none; }
.c-tabs .on { display: flex; align-items: center; gap: 8px; padding: 0 12px 0 14px; background: #eceef4; }
.c-ribbon { height: 75px; display: flex; background: linear-gradient(#f2f2f2, #dedede); border: 2px solid #a9aeb9; border-width: 2px 0 2px 2px; border-radius: 4px 0 0 0; flex: none; box-shadow: inset 0 1px 2px #fff; }
.c-group { display: flex; flex-direction: column; padding-left: 4px; border-right: 1px dotted #999; flex: none; }
.c-group h3 { font-size: 10px; line-height: 12px; height: 12px; color: #000; text-align: center; margin: 1px 0 4px -4px; background: linear-gradient(90deg, transparent, #dadada, transparent); }
.c-group .row { height: 21px; margin-bottom: 7px; gap: 5px; }
.police { width: 314px; }
.para { width: 240px; padding-left: 5px; }
.gallery { flex: 1; min-width: 0; padding-left: 6px; border-right: 0; }
.c-group.gallery h3 { margin-bottom: 2px; padding-left: 38px; }
.classic .seg { border: 1px solid #9b9b9b; border-radius: 3px; background: linear-gradient(#f8f8f8, #d6d6d6); }
.classic .seg button + button { border-left: 1px solid #b0b0b0; }
.classic .seg button { font-family: "Liberation Serif", serif; font-size: 18px; color: #444; }
.classic .seg .on { background: #8c8c8c; }
.classic .w36 .ic, .modern .w32 .ic, .modern .w33 .ic { margin-right: 3px; }
.c-group .combo { height: 20px; width: 48px; border: 1px solid #8d8d8d; }
.c-group .combo.wide { width: 118px; }
.c-group .combo::before { content: ""; position: absolute; right: 0; top: 0; bottom: 0; width: 14px; background: #e6e6e6; border-left: 1px solid #999; pointer-events: none; }
.c-group .combo select { padding-left: 2px; font-size: 12px; }
.classic .ital { font-size: 18px; }
.classic s { font-size: 11px; }
.classic .case { margin-right: 3px; font-size: 15px; }
.classic .g20 { font: 18px/20px "Liberation Serif", serif; }
.classic .ab { font-size: 12px; line-height: 12px; align-self: flex-start; margin-right: -8px; }
.rubber { align-self: flex-end; margin-right: -4px; }
.classic .ink { font-size: 17px; }
.classic .glow { font: bold 18px/20px "Liberation Serif", serif; -webkit-text-stroke: 1px #39bfcf; }
.hl { font: bold 10px/12px "Liberation Serif", serif; color: #229; width: 22px; border-bottom: 4px solid #ff0; background: #a9b6ee; text-align: center; }
.classic .az em { color: #c67b1e; }
.classic .az { font-family: "Liberation Sans", sans-serif; color: #2a4a9c; }
.shelf { flex: 1; margin-bottom: 2px; border: 1px solid #b9b9b9; background: #f3f3f3; display: flex; align-items: center; padding-left: 24px; gap: 7px; }
.style { width: 70px; height: 47px; border: 2px solid #69aede; border-radius: 3px; background: #fff; display: flex; flex-direction: column; overflow: hidden; flex: none; }
.sample { font-size: 12px; line-height: 28px; padding-left: 1px; color: #111; }
.name { font-size: 10px; line-height: 15px; width: 100%; background: #f0f0f0; color: #222; }
.c-hruler { height: 27px; display: flex; background: #eee; flex: none; padding-left: 2px; border-bottom: 1px solid #999; }
.c-tabstop { width: 18px; height: 18px; margin: 4px 0 0; border: 1px solid #b5b5b5; border-radius: 4px; background: #f7f7f7; display: flex; align-items: center; justify-content: center; flex: none; }
.c-hruler .scale { flex: 1; min-width: 0; height: 26px; margin-left: 193px; }
.c-body { flex: 1; min-height: 0; display: flex; background: #e6e6e6; }
.c-body .vscale { width: 21px; }
.c-canvas { position: relative; flex: 1; min-width: 0; display: flex; border: solid #9599a5; border-width: 2px 0 0 3px; background: linear-gradient(#c1c5d0, #a3a9b6 55%, #9aa0ad 85%); padding: 10px 0 0 196px; }
.c-page { flex: 1; background: #fff; box-shadow: -2px 0 #9498a3, 0 -2px #9498a3; padding: 105px 0 0 106px; font-size: 12px; line-height: 14px; color: #000; }
.pointer { position: absolute; left: 93px; top: 325px; }
.c-status { height: 37px; flex: none; display: flex; background: #ececec; border-bottom: 5px solid #d2d2d2; position: relative; }
.c-views { margin: 4px 3px 4px 2px; display: flex; border: 1px solid #909090; border-radius: 3px; background: linear-gradient(#fbfbfb, #dcdcdc); color: #777; }
.c-views button { width: 28px; display: flex; align-items: center; justify-content: center; }
.c-views button + button { border-left: 1px solid #aaa; }
.c-views .on { background: #a2a6ad; }
.c-scroll { flex: 1; border-left: 1px solid #ccc; background: linear-gradient(#fafafa 15px, #999 15px, #999 16px, #f5f5f5 16px, #e6e6e6 30px, #fff 30px); }
```

FILE: rulers.js
```js
const NS = "http://www.w3.org/2000/svg";

function add(svg, name, attrs, text) {
  const el = document.createElementNS(NS, name);
  for (const key in attrs) el.setAttribute(key, attrs[key]);
  if (text !== undefined) el.textContent = text;
  svg.appendChild(el);
  return el;
}

// Both rulers run along one axis; vertical ones turn their labels.
function label(svg, vertical, pos, cross, size, color, value) {
  const x = vertical ? cross : pos;
  const y = vertical ? pos : cross;
  const attrs = { x, y, "font-size": size, fill: color, "text-anchor": "middle", "dominant-baseline": "central" };
  if (vertical) attrs.transform = `rotate(-90 ${x} ${y})`;
  add(svg, "text", attrs, value);
}

function bar(svg, vertical, pos, from, to, color) {
  const p = Math.round(pos) + 0.5;
  add(svg, "path", { d: vertical ? `M${from} ${p}H${to}` : `M${p} ${from}V${to}`, stroke: color });
}

function extent(svg, vertical) {
  const box = svg.getBoundingClientRect();
  return vertical ? box.height : box.width;
}

function modern(id, vertical, origin, start) {
  const svg = document.getElementById(id);
  const end = extent(svg, vertical);
  const unit = 39.65;
  const area = vertical
    ? { x: 0, y: start, width: 15, height: origin - start }
    : { x: start, y: 0, width: origin - start, height: 15 };
  add(svg, "rect", { ...area, fill: "#dcdcdc" });
  for (let q = -10; origin + q * unit / 4 < end; q++) {
    const pos = origin + q * unit / 4;
    if (pos < start || q === 0) continue;
    const half = Math.abs(q) % 4 === 2;
    bar(svg, vertical, pos, half ? 7 : 11, 15, "#bbb");
    if (q % 4 === 0 && pos < end - 6) label(svg, vertical, pos, 6, 11, "#777", Math.abs(q / 4));
  }
  if (!vertical) {
    for (let t = 1; origin + t * 49.5 < end; t++) bar(svg, false, origin + t * 49.5, 16, 19, "#888");
    add(svg, "path", { d: `M${origin - 5} 0l5 6 5-6M${origin - 5} 14v-2l5-5 5 5v2zM${origin - 5} 16h10v5h-10z`, fill: "#fff", stroke: "#999" });
  }
}

function classic(id, vertical, origin, start, cross, lastShade) {
  const svg = document.getElementById(id);
  const end = extent(svg, vertical);
  const unit = 28;
  const box = (from, length, fill, rx, stroke) => add(svg, "rect", vertical
    ? { x: cross - 7, y: from, width: 14, height: length, rx, fill, stroke }
    : { x: from, y: cross - 7, width: length, height: 14, rx, fill, stroke });
  box(start, end + 20, vertical ? "#dcdde0" : "#fafafa", 6, "#b4b8bf");
  box(start, lastShade - start, "#a9c9e6", 6, "#98b4cf");
  box(lastShade - 8, 8, "#a9c9e6", 0, "none");
  for (let q = -8; origin + q * unit / 4 < end; q++) {
    const pos = origin + q * unit / 4;
    if (pos < start + 4 || q === 0) continue;
    const kind = Math.abs(q) % 4;
    if (kind === 0) {
      if (pos < end - 6) label(svg, vertical, pos, cross, 10, "#222", Math.abs(q / 4));
    }
    else if (kind === 2) bar(svg, vertical, pos, cross - 2, cross + 3, "#555");
    else bar(svg, vertical, pos, cross, cross + 1, "#555");
  }
  if (!vertical) {
    for (let t = 0; 346 + t * 35.4 < end; t++) bar(svg, false, 346 + t * 35.4, 21, 24, "#555");
    add(svg, "path", { d: "M108 4h8v3l-4 4 4 4v2h-8v-2l4-4-4-4zM108 19h8v5h-8z", fill: "#8cc5f2", stroke: "#2268b5" });
    add(svg, "path", { d: "M312 16v-5h4M314 8l3 3-3 3", fill: "none", stroke: "#111", "stroke-width": 1.5 });
  }
}

modern("m-h", false, 126, 27);
modern("m-v", true, 124, 24);
classic("c-h", false, 62, 1, 12, 64);
classic("c-v", true, 41, 7, 10, 41);
```
